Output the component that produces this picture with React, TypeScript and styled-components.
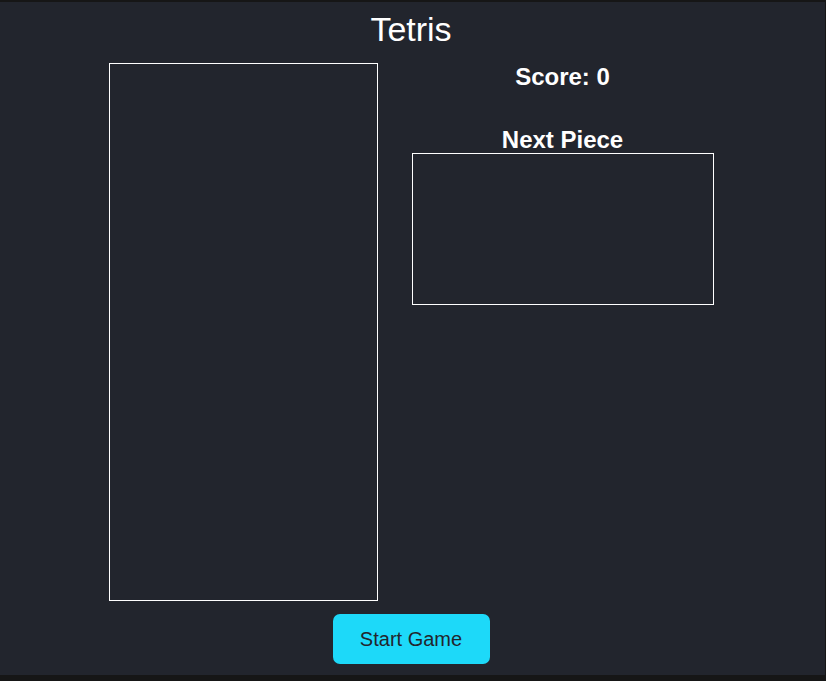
import React from 'react';
import styled, { createGlobalStyle } from 'styled-components';

const GlobalStyle = createGlobalStyle`
  html, body {
    margin: 0;
    padding: 0;
    background: #161616;
  }
  body {
    font-family: "Liberation Sans", Arial, sans-serif;
  }
`;

const Page = styled.div`
  width: 825px;
  height: 673px;
  margin-top: 2px;
  padding-right: 3px;
  background: #22252d;
  color: #ffffff;
  display: flex;
  flex-direction: column;
  align-items: center;
  box-sizing: border-box;
`;

const Title = styled.h1`
  margin: 8px 0 14px;
  font-size: 34px;
  line-height: 39px;
  font-weight: 400;
`;

const GameRow = styled.div`
  display: flex;
  align-items: flex-start;
  gap: 34px;
`;

const Board = styled.div`
  width: 267px;
  height: 536px;
  border: 1px solid #ffffff;
`;

const SidePanel = styled.div`
  width: 302px;
  display: flex;
  flex-direction: column;
  align-items: center;
`;

const Heading = styled.h2<{ $gap?: number }>`
  margin: 0 0 ${(p) => p.$gap ?? 0}px;
  font-size: 24px;
  line-height: 28px;
  font-weight: 700;
`;

const NextLabel = styled(Heading)`
  line-height: 27px;
`;

const PreviewBox = styled.div`
  width: 300px;
  height: 150px;
  border: 1px solid #ffffff;
`;

const StartButton = styled.button`
  margin-top: 13px;
  width: 157px;
  height: 50px;
  border: none;
  border-radius: 7px;
  background: #1dd9f9;
  color: #22252d;
  font-family: "Liberation Sans", Arial, sans-serif;
  font-size: 20px;
  cursor: pointer;
`;

const App = () => {
  const score = 0;

  return (
    <>
      <GlobalStyle />
      <Page>
        <Title>Tetris</Title>
        <GameRow>
          <Board />
          <SidePanel>
            <Heading $gap={35}>Score: {score}</Heading>
            <NextLabel>Next Piece</NextLabel>
            <PreviewBox />
          </SidePanel>
        </GameRow>
        <StartButton>Start Game</StartButton>
      </Page>
    </>
  );
};

export default App;
